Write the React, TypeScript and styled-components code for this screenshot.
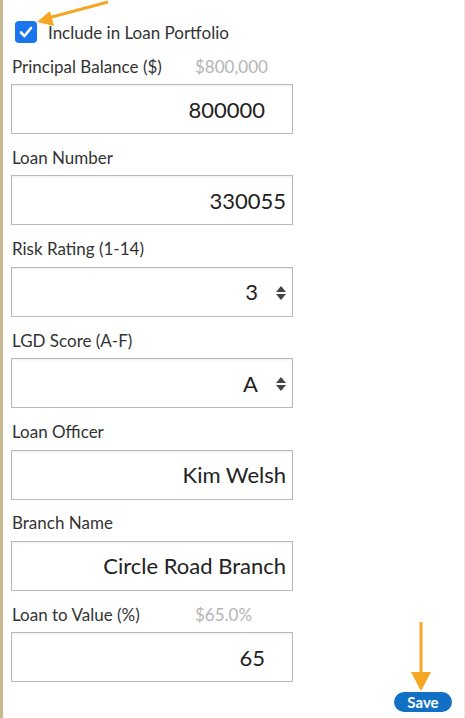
import React from "react";
import styled, { createGlobalStyle } from "styled-components";

const Global = createGlobalStyle`
  html, body { margin: 0; padding: 0; background: #fff; }
  body { font-family: Lato, "Open Sans", "Liberation Sans", sans-serif; color: #333; }
  * { box-sizing: border-box; }
`;

const Page = styled.div`
  position: relative;
  width: 465px;
  min-height: 718px;
  border-left: 3px solid #c6b88f;
  border-right: 1px solid #efe7d8;
  padding: 20px 12px 0 8px;
  display: flex;
  flex-direction: column;
`;

const CheckRow = styled.label`
  display: flex;
  align-items: center;
  gap: 11px;
  padding-left: 4px;
  height: 24px;
  font-size: 17px;
  color: #333;
  margin-bottom: 11px;
`;

const CheckBox = styled.span`
  width: 22px;
  height: 22px;
  border-radius: 4px;
  background: #1a75ee;
  display: flex;
  align-items: center;
  justify-content: center;
`;

const FieldList = styled.div`
  display: flex;
  flex-direction: column;
  gap: 12.4px;
`;

const Field = styled.div`
  width: 282px;
  display: flex;
  flex-direction: column;
`;

const LabelRow = styled.div`
  display: flex;
  align-items: center;
  height: 22px;
  margin-bottom: 7px;
  padding-left: 1px;
`;

const Label = styled.span`
  font-size: 17px;
  color: #333;
  width: 183px;
`;

const Hint = styled.span`
  font-size: 17px;
  color: #b5b5b5;
`;

const InputBox = styled.div`
  position: relative;
  height: 50px;
  border: 1px solid #b9b9b9;
  box-shadow: inset 0 1px 2px rgba(0, 0, 0, 0.08);
  background: #fff;
`;

const TextInput = styled.input<{ $pad: number }>`
  width: 100%;
  height: 100%;
  border: none;
  outline: none;
  background: transparent;
  text-align: right;
  font-family: inherit;
  font-size: 22px;
  color: #222;
  padding: 0 ${(p) => p.$pad}px 0 8px;
`;

const Stepper = styled.svg`
  position: absolute;
  right: 6px;
  top: 17px;
`;

const Footer = styled.div`
  display: flex;
  justify-content: flex-end;
  padding-top: 10px;
`;

const SaveButton = styled.button`
  width: 58px;
  height: 20px;
  border-radius: 10px;
  border: none;
  background: #1170c4;
  color: #fff;
  font-family: inherit;
  font-size: 15px;
  font-weight: 700;
  padding: 0;
  line-height: 20px;
`;

const Arrow = styled.svg`
  position: absolute;
  left: -3px;
  top: 0;
  pointer-events: none;
`;

type F = { label: string; value: string; hint?: string; pad: number; stepper?: boolean };

const fields: F[] = [
  { label: "Principal Balance ($)", hint: "$800,000", value: "800000", pad: 27 },
  { label: "Loan Number", value: "330055", pad: 6 },
  { label: "Risk Rating (1-14)", value: "3", pad: 34, stepper: true },
  { label: "LGD Score (A-F)", value: "A", pad: 34, stepper: true },
  { label: "Loan Officer", value: "Kim Welsh", pad: 6 },
  { label: "Branch Name", value: "Circle Road Branch", pad: 6 },
  { label: "Loan to Value (%)", hint: "$65.0%", value: "65", pad: 27 },
];

export default function App() {
  return (
    <>
      <Global />
      <Page>
        <CheckRow>
          <CheckBox>
            <svg width="16" height="16" viewBox="0 0 16 16">
              <path d="M3 8.5 L6.5 12 L13 4" stroke="#fff" strokeWidth="2.6" fill="none" strokeLinecap="round" strokeLinejoin="round" />
            </svg>
          </CheckBox>
          Include in Loan Portfolio
        </CheckRow>
        <FieldList>
          {fields.map((f) => (
            <Field key={f.label}>
              <LabelRow>
                <Label>{f.label}</Label>
                {f.hint && <Hint>{f.hint}</Hint>}
              </LabelRow>
              <InputBox>
                <TextInput $pad={f.pad} defaultValue={f.value} readOnly />
                {f.stepper && (
                  <Stepper width="10" height="16" viewBox="0 0 10 16">
                    <path d="M5 1 L10 7 H0 Z" fill="#444" />
                    <path d="M5 15 L10 9 H0 Z" fill="#444" />
                  </Stepper>
                )}
              </InputBox>
            </Field>
          ))}
        </FieldList>
        <Footer>
          <SaveButton>Save</SaveButton>
        </Footer>
        <Arrow width="465" height="718" viewBox="0 0 465 718">
          <line x1="108" y1="2" x2="48" y2="18" stroke="#f5a623" strokeWidth="3" />
          <path d="M37 22 L50 11 L54 26 Z" fill="#f5a623" />
          <line x1="421" y1="622" x2="421" y2="674" stroke="#f5a623" strokeWidth="3" />
          <path d="M411 672 L431 672 L421 691 Z" fill="#f5a623" />
        </Arrow>
      </Page>
    </>
  );
}
